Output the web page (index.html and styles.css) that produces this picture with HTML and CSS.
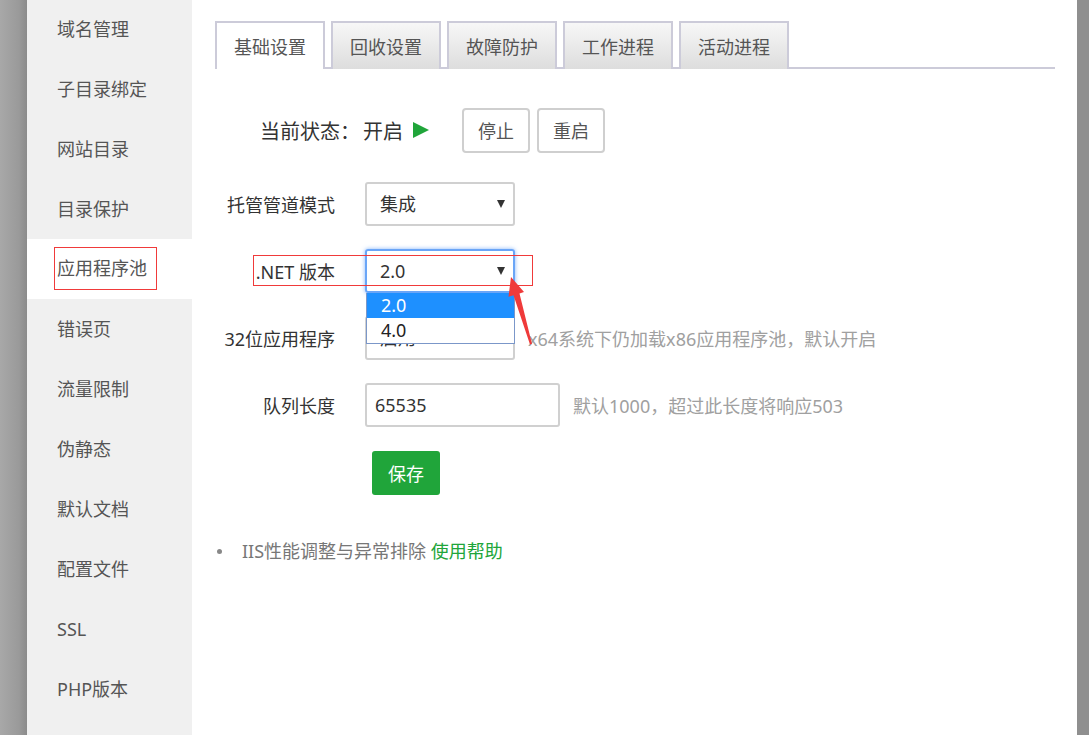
FILE: index.html
```html
<!DOCTYPE html>
<html lang="zh-CN">
<head>
  <meta charset="UTF-8" />
  <title>应用程序池</title>
  <link rel="stylesheet" href="styles.css">
</head>
<body>
  <div class="edge-left"></div>

  <ul class="sidebar">
    <li>域名管理</li>
    <li>子目录绑定</li>
    <li>网站目录</li>
    <li>目录保护</li>
    <li class="active"><span class="mark">应用程序池</span></li>
    <li>错误页</li>
    <li>流量限制</li>
    <li>伪静态</li>
    <li>默认文档</li>
    <li>配置文件</li>
    <li>SSL</li>
    <li>PHP版本</li>
  </ul>

  <div class="main">
    <div class="tabs">
      <div class="tab active">基础设置</div>
      <div class="tab">回收设置</div>
      <div class="tab">故障防护</div>
      <div class="tab">工作进程</div>
      <div class="tab">活动进程</div>
    </div>

    <div class="status-row">
      <span class="status-label">当前状态：</span>
      <span class="status-value">开启</span>
      <span class="play"></span>
      <button class="btn">停止</button>
      <button class="btn">重启</button>
    </div>

    <div class="form-row">
      <label class="label">托管管道模式</label>
      <div class="select">集成<span class="caret"></span></div>
    </div>

    <div class="form-row">
      <label class="label">.NET 版本</label>
      <div class="select focused">2.0<span class="caret"></span>
        <ul class="options">
          <li class="selected">2.0</li>
          <li>4.0</li>
        </ul>
      </div>
    </div>

    <div class="form-row">
      <label class="label">32位应用程序</label>
      <div class="select">启用<span class="caret"></span></div>
      <span class="hint">x64系统下仍加载x86应用程序池，默认开启</span>
    </div>

    <div class="form-row">
      <label class="label">队列长度</label>
      <input class="input" type="text" value="65535" />
      <span class="hint">默认1000，超过此长度将响应503</span>
    </div>

    <div class="form-row save-row">
      <button class="btn-save">保存</button>
    </div>

    <ul class="help">
      <li>IIS性能调整与异常排除&nbsp;<a href="#">使用帮助</a></li>
    </ul>
  </div>

  <div class="edge-right"></div>

  <!-- annotation layer -->
  <div class="note-box"></div>
  <svg class="note-arrow" width="1089" height="735" viewBox="0 0 1089 735">
    <polygon points="511,277 524,292 519.5,293.4 532,344 530,344.4 513.5,295.3 508.5,296.8" fill="#ef3a3a" />
  </svg>
</body>
</html>
```

FILE: styles.css
```css
* {
  box-sizing: border-box;
}

body {
  margin: 0;
  height: 735px;
  overflow: hidden;
  display: flex;
  font-family: "Noto Sans", "Noto Sans CJK SC", sans-serif;
  font-size: 18px;
  color: #333;
  position: relative;
}

.edge-left {
  width: 27px;
  background: linear-gradient(to right, #a8a8a8, #9a9a9a 70%, #8b8b8b);
}

.edge-right {
  width: 12px;
  background: #8f8f8f;
}

.sidebar {
  width: 165px;
  margin: 0;
  padding: 0;
  list-style: none;
  background: #f0f0f0;
}

.sidebar li {
  height: 60px;
  line-height: 60px;
  padding-left: 30px;
  color: #555;
  white-space: nowrap;
}

.sidebar li:first-child {
  margin-top: -1px;
}

.sidebar li.active {
  background: #fff;
}

.sidebar .mark {
  display: inline-block;
  line-height: 41px;
  margin-left: -3px;
  padding: 0 9px 0 2px;
  border: 1px solid #f03a3a;
  vertical-align: middle;
  position: relative;
  top: -3px;
}

.main {
  flex: 1;
  background: #fff;
  padding: 21px 22px 0 23px;
}

/* tabs */
.tabs {
  display: flex;
  gap: 6px;
  border-bottom: 2px solid #cccbd9;
}

.tab {
  width: 110px;
  height: 48px;
  margin-bottom: -2px;
  line-height: 48px;
  text-align: center;
  color: #555;
  border: 2px solid #cccbd9;
  border-bottom: none;
  background: linear-gradient(to bottom, #f7f7f7, #dddddd);
}

.tab.active {
  background: #fff;
}

/* status */
.status-row {
  display: flex;
  align-items: center;
  height: 44px;
  margin-top: 39px;
  padding-left: 45px;
  font-size: 20px;
}

.status-value {
  margin-left: 3px;
}

.play {
  width: 0;
  height: 0;
  margin: 0 33px 0 10px;
  border-left: 16px solid #20a53a;
  border-top: 8px solid transparent;
  border-bottom: 8px solid transparent;
}

.btn {
  height: 45px;
  width: 68px;
  margin-right: 7px;
  padding: 0;
  font: inherit;
  font-size: 18px;
  color: #555;
  background: #fff;
  border: 2px solid #cfcfcf;
  border-radius: 4px;
}

/* form */
.form-row {
  display: flex;
  align-items: center;
  height: 44px;
  margin-top: 23px;
}

.status-row + .form-row {
  margin-top: 30px;
}

.label {
  width: 150px;
  padding-right: 30px;
  text-align: right;
  color: #333;
  white-space: nowrap;
}

.select {
  position: relative;
  width: 150px;
  height: 44px;
  line-height: 40px;
  padding-left: 13px;
  color: #333;
  border: 2px solid #d0d0d0;
  border-radius: 3px;
}

.select.focused {
  border-color: #6aa5f7;
  box-shadow: 0 0 4px rgba(80, 150, 250, 0.7);
  z-index: 5;
}

.caret {
  position: absolute;
  right: 8px;
  top: 16px;
  width: 0;
  height: 0;
  border-top: 8px solid #333;
  border-left: 4.5px solid transparent;
  border-right: 4.5px solid transparent;
}

.options {
  position: absolute;
  left: -1px;
  top: 42px;
  width: 149px;
  margin: 0;
  padding: 0;
  list-style: none;
  background: #fff;
  border: 1px solid #7b97c9;
  border-top: none;
}

.options li {
  height: 25px;
  line-height: 25px;
  padding-left: 14px;
  color: #222;
}

.options li.selected {
  background: #1e90ff;
  color: #fff;
}

.hint {
  margin-left: 13px;
  color: #a0a0a0;
  white-space: nowrap;
}

.input {
  width: 195px;
  height: 44px;
  padding: 0 8px;
  font: inherit;
  color: #333;
  border: 2px solid #d0d0d0;
  border-radius: 3px;
  outline: none;
}

.save-row {
  margin-top: 24px;
  padding-left: 157px;
}

.btn-save {
  width: 68px;
  height: 44px;
  padding: 0;
  font: inherit;
  color: #fff;
  background: #20a53a;
  border: none;
  border-radius: 3px;
}

.help {
  margin: 44px 0 0;
  padding: 0;
  list-style: none;
  color: #777;
  line-height: 24px;
}

.help li {
  display: flex;
  align-items: center;
}

.help li::before {
  content: "";
  width: 5px;
  height: 5px;
  margin: 0 20px 0 2px;
  border-radius: 50%;
  background: #888;
}

.help a {
  color: #20a53a;
  text-decoration: none;
}

/* annotations */
.note-box {
  position: absolute;
  left: 253px;
  top: 255px;
  width: 280px;
  height: 31px;
  border: 1px solid #f03a3a;
  z-index: 6;
  pointer-events: none;
}

.note-arrow {
  position: absolute;
  left: 0;
  top: 0;
  z-index: 7;
  pointer-events: none;
}
```
